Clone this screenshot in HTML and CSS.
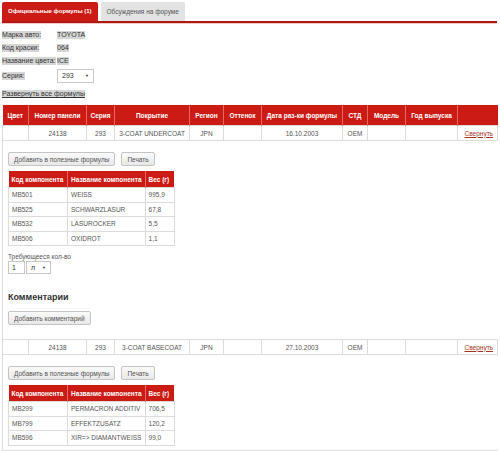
FILE: index.html
```html
<!DOCTYPE html>
<html lang="ru">
  <head>
    <meta charset="UTF-8" />
    <meta name="viewport" content="width=device-width, initial-scale=1.0" />
    <title>Формулы краски</title>
    <link rel="stylesheet" href="styles.css">
  </head>
  <body>
    <div class="tabs">
      <div class="tab active">Официальные формулы (1)</div>
      <div class="tab">Обсуждения на форуме</div>
    </div>

    <div class="car-info">
      <div class="info-row"><span class="lbl">Марка авто:</span><span class="val">TOYOTA</span></div>
      <div class="info-row"><span class="lbl">Код краски:</span><span class="val">064</span></div>
      <div class="info-row"><span class="lbl">Название цвета:</span><span class="val">ICE</span></div>
      <div class="info-row series"><span class="lbl">Серия:</span><div class="fake-select series-select">293<span class="arrow">▼</span></div></div>
    </div>

    <a class="expand-all" href="#">Развернуть все формулы</a>

    <table class="formulas">
      <colgroup>
        <col style="width:26px"><col style="width:58px"><col style="width:28px"><col style="width:75px">
        <col style="width:34px"><col style="width:38px"><col style="width:81px"><col style="width:25px">
        <col style="width:38px"><col style="width:52px"><col style="width:40px">
      </colgroup>
      <thead>
        <tr>
          <th>Цвет</th>
          <th>Номер панели</th>
          <th>Серия</th>
          <th>Покрытие</th>
          <th>Регион</th>
          <th>Оттенок</th>
          <th>Дата раз-ки формулы</th>
          <th>СТД</th>
          <th>Модель</th>
          <th>Год выпуска</th>
          <th></th>
        </tr>
      </thead>
      <tbody>
        <tr class="formula-row">
          <td></td>
          <td>24138</td>
          <td>293</td>
          <td>3-COAT UNDERCOAT</td>
          <td>JPN</td>
          <td></td>
          <td>16.10.2003</td>
          <td>OEM</td>
          <td></td>
          <td></td>
          <td><a class="collapse" href="#">Свернуть</a></td>
        </tr>
        <tr class="details">
          <td colspan="11">
            <div class="buttons">
              <button class="btn">Добавить в полезные формулы</button>
              <button class="btn">Печать</button>
            </div>
            <table class="components">
              <thead>
                <tr><th>Код компонента</th><th>Название компонента</th><th>Вес (г)</th></tr>
              </thead>
              <tbody>
                <tr><td>MB501</td><td>WEISS</td><td>995,9</td></tr>
                <tr><td>MB525</td><td>SCHWARZLASUR</td><td>67,8</td></tr>
                <tr><td>MB532</td><td>LASUROCKER</td><td>5,5</td></tr>
                <tr><td>MB506</td><td>OXIDROT</td><td>1,1</td></tr>
              </tbody>
            </table>
            <div class="qty-label">Требующееся кол-во</div>
            <div class="qty">
              <div class="qty-input">1</div>
              <div class="fake-select unit-select">л<span class="arrow">▼</span></div>
            </div>
            <h2 class="comments-title">Комментарии</h2>
            <button class="btn">Добавить комментарий</button>
          </td>
        </tr>
        <tr class="formula-row">
          <td></td>
          <td>24138</td>
          <td>293</td>
          <td>3-COAT BASECOAT</td>
          <td>JPN</td>
          <td></td>
          <td>27.10.2003</td>
          <td>OEM</td>
          <td></td>
          <td></td>
          <td><a class="collapse" href="#">Свернуть</a></td>
        </tr>
        <tr class="details">
          <td colspan="11">
            <div class="buttons">
              <button class="btn">Добавить в полезные формулы</button>
              <button class="btn">Печать</button>
            </div>
            <table class="components">
              <thead>
                <tr><th>Код компонента</th><th>Название компонента</th><th>Вес (г)</th></tr>
              </thead>
              <tbody>
                <tr><td>MB299</td><td>PERMACRON ADDITIV</td><td>706,5</td></tr>
                <tr><td>MB799</td><td>EFFEKTZUSATZ</td><td>120,2</td></tr>
                <tr><td>MB596</td><td>XIR=&gt; DIAMANTWEISS</td><td>99,0</td></tr>
              </tbody>
            </table>
          </td>
        </tr>
      </tbody>
    </table>
  </body>
</html>
```

FILE: styles.css
```css
body {
  font-family: "Liberation Sans", Arial, sans-serif;
  font-size: 7px;
  color: #444;
  margin: 0;
  padding: 2px 3px 0 2px;
  background: #fff;
}

/* tabs */
.tabs {
  display: flex;
  gap: 3px;
  border-bottom: 2px solid #b01812;
  box-shadow: 0 1px 0 #f2c9c6;
}

.tab {
  height: 19px;
  line-height: 19px;
  padding: 0 6px;
  font-size: 6.5px;
  background-color: #e3e3e3;
  color: #555;
  border-radius: 2px 2px 0 0;
}

.tab.active {
  background-color: #cc1a14;
  color: #fff;
  font-size: 6px;
  font-weight: bold;
  padding: 0 6px;
}

/* car info */
.car-info {
  margin-top: 5px;
}

.info-row {
  display: grid;
  grid-template-columns: 55px auto;
  align-items: center;
  height: 13px;
}

.info-row.series {
  height: 16px;
  margin-top: 1px;
}

.lbl,
.val {
  justify-self: start;
  background-color: #d6d6d6;
  color: #333;
  line-height: 8px;
}

.fake-select {
  position: relative;
  height: 12px;
  line-height: 12px;
  border: 1px solid #c8c8c8;
  background: #fff;
  color: #333;
  padding-left: 4px;
  box-sizing: border-box;
}

.fake-select .arrow {
  position: absolute;
  right: 4px;
  top: 0;
  font-size: 4px;
}

.series-select {
  width: 37px;
  height: 14px;
  line-height: 12px;
}

.expand-all {
  display: inline-block;
  margin-top: 6px;
  color: #333;
  background-color: #d6d6d6;
  line-height: 8px;
}

/* formulas table */
.formulas {
  width: 495px;
  margin-top: 7px;
  border-collapse: collapse;
  table-layout: fixed;
}

.formulas > thead th {
  height: 20px;
  padding: 0 2px;
  background-color: #cc1a14;
  color: #fff;
  font-size: 6.5px;
  font-weight: bold;
  border-right: 1px solid #e46a64;
  text-align: center;
}

.formulas > thead th:last-child {
  border-right: none;
}

.formula-row td {
  height: 14px;
  padding: 0 2px;
  border: 1px solid #dcdcdc;
  text-align: center;
  color: #555;
  font-size: 6.5px;
  white-space: nowrap;
}

.collapse {
  color: #a5321f;
  float: right;
  margin-right: 2px;
}

.details > td {
  padding: 11px 5px 14px;
  border: 1px solid #dcdcdc;
  border-top: none;
  border-right-color: #fff;
}

.formulas .details:last-child > td {
  padding-top: 11px;
  padding-bottom: 4px;
}

/* buttons */
.buttons {
  display: flex;
  gap: 6px;
}

.btn {
  font-family: inherit;
  font-size: 6.5px;
  height: 14px;
  padding: 0 5px;
  color: #555;
  background: linear-gradient(#fafafa, #e8e8e8);
  border: 1px solid #c4c4c4;
  border-radius: 2px;
}

/* components */
.components {
  margin-top: 5px;
  border-collapse: collapse;
  font-size: 6.5px;
}

.components th {
  height: 16px;
  padding: 0 3px;
  background-color: #cc1a14;
  color: #fff;
  font-weight: bold;
  text-align: left;
  border-right: 1px solid #e46a64;
  white-space: nowrap;
}

.components th:last-child {
  border-right: none;
}

.components td {
  height: 13.5px;
  padding: 0 3px;
  border: 1px solid #dcdcdc;
  color: #555;
  white-space: nowrap;
}

.components td:nth-child(1) { width: 52px; }
.components td:nth-child(2) { width: 70px; }
.components td:nth-child(3) { width: 22px; }

.qty-label {
  margin-top: 7px;
  color: #555;
  font-size: 6.5px;
}

.qty {
  display: flex;
  gap: 1px;
  margin-top: 1px;
}

.qty-input {
  width: 17px;
  height: 13px;
  line-height: 12px;
  border: 1px solid #c8c8c8;
  box-sizing: border-box;
  padding-left: 3px;
  color: #333;
}

.unit-select {
  width: 25px;
  height: 13px;
}

.comments-title {
  font-size: 9px;
  font-weight: bold;
  color: #333;
  margin: 18px 0 9px;
}
```
